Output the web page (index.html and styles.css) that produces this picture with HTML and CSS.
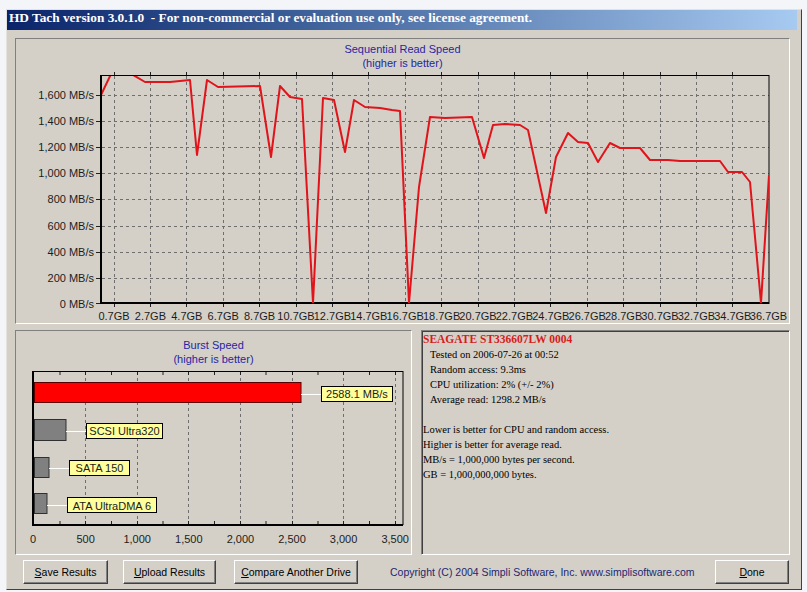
FILE: index.html
```html
<!DOCTYPE html>
<html>
<head>
<meta charset="utf-8">
<title>HD Tach</title>
<link rel="stylesheet" href="styles.css">
</head>
<body>
<div class="window">
  <div class="titlebar">HD Tach version 3.0.1.0&nbsp; - For non-commercial or evaluation use only, see license agreement.</div>
  <div class="content">
    <section class="panel seq">
      <div class="chart-title">Sequential Read Speed<br>(higher is better)</div>
      <svg class="chart" width="773" height="252" viewBox="16 70 773 252">
        <defs><clipPath id="plotclip"><rect x="102" y="76" width="667" height="227"/></clipPath></defs>
        <path class="grid" d="M114.5 76V302M150.5 76V302M186.5 76V302M223.5 76V302M259.5 76V302M296.5 76V302M332.5 76V302M368.5 76V302M405.5 76V302M441.5 76V302M478.5 76V302M514.5 76V302M550.5 76V302M587.5 76V302M623.5 76V302M660.5 76V302M696.5 76V302M732.5 76V302"/>
        <path class="grid" d="M102 278.5H769M102 252.5H769M102 226.5H769M102 199.5H769M102 173.5H769M102 147.5H769M102 121.5H769M102 95.5H769"/>
        <path class="tick" d="M96 303.5H100M96 278.5H100M96 252.5H100M96 226.5H100M96 199.5H100M96 173.5H100M96 147.5H100M96 121.5H100M96 95.5H100"/>
        <path class="tick" d="M114.5 304V307M150.5 304V307M186.5 304V307M223.5 304V307M259.5 304V307M296.5 304V307M332.5 304V307M368.5 304V307M405.5 304V307M441.5 304V307M478.5 304V307M514.5 304V307M550.5 304V307M587.5 304V307M623.5 304V307M660.5 304V307M696.5 304V307M732.5 304V307"/>
        <path class="tick" d="M114.5 72V75M150.5 72V75M186.5 72V75M223.5 72V75M259.5 72V75M296.5 72V75M332.5 72V75M368.5 72V75M405.5 72V75M441.5 72V75M478.5 72V75M514.5 72V75M550.5 72V75M587.5 72V75M623.5 72V75M660.5 72V75M696.5 72V75M732.5 72V75"/>
        <rect class="frame" x="100.5" y="75.5" width="668.5" height="228"/>
        <path class="axis-line" d="M101 75V304M100 303H769"/>
        <polyline class="readline" clip-path="url(#plotclip)" points="100,97 112,72 128,72 145,82 170,82 190,80 197,155 207,80 218,87 260,86 271,157 280,86 290,97 302,99 313,303 323,98 334,100 345,152 354,100 365,107 380,108 392,110 400,111 409,303 419,187 430,117 445,118 472,117 484,158 493,125 505,124 520,125 528,130 546,213 556,157 568,133 578,142 588,143 598,162 610,143 620,148 640,148 650,160 668,160 680,161 720,161 728,172 742,172 750,182 761,303 769,175"/>
        <g class="lbl" text-anchor="end">
          <text x="94" y="308">0 MB/s</text>
          <text x="94" y="282">200 MB/s</text>
          <text x="94" y="256">400 MB/s</text>
          <text x="94" y="230">600 MB/s</text>
          <text x="94" y="203">800 MB/s</text>
          <text x="94" y="177">1,000 MB/s</text>
          <text x="94" y="151">1,200 MB/s</text>
          <text x="94" y="125">1,400 MB/s</text>
          <text x="94" y="99">1,600 MB/s</text>
        </g>
        <g class="lbl" text-anchor="middle">
          <text x="114" y="320">0.7GB</text>
          <text x="150.4" y="320">2.7GB</text>
          <text x="186.8" y="320">4.7GB</text>
          <text x="223.2" y="320">6.7GB</text>
          <text x="259.6" y="320">8.7GB</text>
          <text x="296" y="320">10.7GB</text>
          <text x="332.4" y="320">12.7GB</text>
          <text x="368.8" y="320">14.7GB</text>
          <text x="405.2" y="320">16.7GB</text>
          <text x="441.6" y="320">18.7GB</text>
          <text x="478" y="320">20.7GB</text>
          <text x="514.4" y="320">22.7GB</text>
          <text x="550.8" y="320">24.7GB</text>
          <text x="587.2" y="320">26.7GB</text>
          <text x="623.6" y="320">28.7GB</text>
          <text x="660" y="320">30.7GB</text>
          <text x="696.4" y="320">32.7GB</text>
          <text x="732.8" y="320">34.7GB</text>
          <text x="768.5" y="320">36.7GB</text>
        </g>
      </svg>
    </section>

    <div class="bottom-row">
      <section class="panel burst">
        <div class="chart-title">Burst Speed<br>(higher is better)</div>
        <svg class="chart" width="395" height="188" viewBox="16 366 395 188">
          <path class="grid" d="M85.5 372V524M137.5 372V524M188.5 372V524M240.5 372V524M292.5 372V524M343.5 372V524M395.5 372V524"/>
          <path class="tick" d="M60 521V524M85.5 521V524M111.5 521V524M137.5 521V524M163 521V524M188.5 521V524M214.5 521V524M240.5 521V524M266 521V524M292.5 521V524M318 521V524M343.5 521V524M369.5 521V524M395.5 521V524"/>
          <path class="tick" d="M60 372V375M85.5 372V375M111.5 372V375M137.5 372V375M163 372V375M188.5 372V375M214.5 372V375M240.5 372V375M266 372V375M292.5 372V375M318 372V375M343.5 372V375M369.5 372V375M395.5 372V375"/>
          <rect class="frame" x="33.5" y="371.5" width="369.5" height="153"/>
          <path class="axis-line" d="M33 371V526M32 525H403"/>

          <rect class="bar-red" x="34.5" y="382.5" width="266.5" height="20"/>
          <path class="connector" d="M301 394.5H321"/>
          <rect class="tag" x="321.5" y="386.5" width="71" height="15"/>
          <text class="lbl" x="357" y="398" text-anchor="middle">2588.1 MB/s</text>

          <rect class="bar-gray" x="34.5" y="419.5" width="31.5" height="21"/>
          <path class="connector" d="M66 431.5H86"/>
          <rect class="tag" x="86.5" y="423.5" width="76" height="15"/>
          <text class="lbl" x="124.5" y="435" text-anchor="middle">SCSI Ultra320</text>

          <rect class="bar-gray" x="34.5" y="457.5" width="14.5" height="20"/>
          <path class="connector" d="M49 468.5H69"/>
          <rect class="tag" x="69.5" y="460.5" width="60" height="15"/>
          <text class="lbl" x="99.5" y="472" text-anchor="middle">SATA 150</text>

          <rect class="bar-gray" x="34.5" y="493.5" width="12.5" height="20"/>
          <path class="connector" d="M47 505.5H67"/>
          <rect class="tag" x="67.5" y="497.5" width="89" height="15"/>
          <text class="lbl" x="112" y="509.5" text-anchor="middle">ATA UltraDMA 6</text>

          <g class="lbl" text-anchor="middle">
            <text x="33" y="543">0</text>
            <text x="85.6" y="543">500</text>
            <text x="137.2" y="543">1,000</text>
            <text x="188.8" y="543">1,500</text>
            <text x="240.4" y="543">2,000</text>
            <text x="292" y="543">2,500</text>
            <text x="343.6" y="543">3,000</text>
            <text x="395.2" y="543">3,500</text>
          </g>
        </svg>
      </section>

      <section class="info">
        <div class="drive">SEAGATE ST336607LW 0004</div>
        <div class="ind">Tested on 2006-07-26 at 00:52</div>
        <div class="ind">Random access: 9.3ms</div>
        <div class="ind">CPU utilization: 2% (+/- 2%)</div>
        <div class="ind">Average read: 1298.2 MB/s</div>
        <div class="blank"></div>
        <div>Lower is better for CPU and random access.</div>
        <div>Higher is better for average read.</div>
        <div>MB/s = 1,000,000 bytes per second.</div>
        <div>GB = 1,000,000,000 bytes.</div>
      </section>
    </div>

    <div class="actions">
      <button class="btn btn-save"><u>S</u>ave Results</button>
      <button class="btn btn-upload"><u>U</u>pload Results</button>
      <button class="btn btn-compare"><u>C</u>ompare Another Drive</button>
      <span class="copyright">Copyright (C) 2004 Simpli Software, Inc. www.simplisoftware.com</span>
      <button class="btn btn-done"><u>D</u>one</button>
    </div>
  </div>
</div>
</body>
</html>
```

FILE: styles.css
```css
* { box-sizing: border-box; }
html, body { margin: 0; padding: 0; }
body {
  width: 807px;
  height: 592px;
  overflow: hidden;
  background: #f3f5f8;
  font-family: "Liberation Sans", Arial, sans-serif;
}
.window {
  margin: 9px 0 0 6px;
  width: 796px;
  height: 581px;
  background: #d4d0c8;
  border: 1px solid;
  border-color: #e4e2dc #404040 #404040 #e4e2dc;
  padding-right: 4px;
}
.titlebar {
  height: 20px;
  line-height: 20px;
  padding-left: 2px;
  background: linear-gradient(90deg, #0a246a 0%, #3a5c96 35%, #a6caf0 100%);
  color: #fff;
  font: bold 13.3px "Liberation Serif", "Times New Roman", serif;
  white-space: nowrap;
  overflow: hidden;
}
.content {
  padding: 8px 7px 0 8px;
}
.panel {
  border: 1px solid;
  border-color: #808080 #ffffff #ffffff #808080;
}
.seq { height: 286px; }
.chart-title {
  text-align: center;
  color: #2626a2;
  font-size: 11px;
  line-height: 14px;
}
.seq .chart-title { padding-top: 3px; }
.burst .chart-title { padding-top: 7px; }
.chart { display: block; }
.chart .grid { stroke: #6e6e6e; stroke-width: 1; stroke-dasharray: 3 3; fill: none; }
.chart .tick { stroke: #202020; stroke-width: 1; fill: none; }
.chart .frame { fill: none; stroke: #000; stroke-width: 1; }
.chart .axis-line { stroke: #000; stroke-width: 2; fill: none; }
.chart .readline { fill: none; stroke: #e0141a; stroke-width: 2; stroke-linejoin: round; }
.chart .lbl { font-family: "Liberation Sans", Arial, sans-serif; font-size: 11px; fill: #1c1c1c; }
.chart .bar-red { fill: #ff0000; stroke: #5a0000; stroke-width: 1; }
.chart .bar-gray { fill: #808080; stroke: #303030; stroke-width: 1; }
.chart .connector { stroke: #ffffff; stroke-width: 1; fill: none; }
.chart .tag { fill: #ffff9c; stroke: #000; stroke-width: 1; }

.bottom-row {
  display: flex;
  gap: 9px;
  margin-top: 6px;
  height: 225px;
}
.burst { width: 397px; height: 225px; }
.info {
  flex: 1;
  height: 225px;
  border: 1px solid;
  border-color: #808080 #ffffff #ffffff #808080;
  box-shadow: inset 1px 1px 0 #404040;
  padding: 1px 0 0 1px;
  font-family: "Liberation Serif", "Times New Roman", serif;
  font-size: 10.5px;
  line-height: 15px;
  color: #000;
}
.info .drive {
  font-weight: bold;
  font-size: 11.5px;
  color: #d81c1c;
}
.info .ind { padding-left: 7px; }
.info .blank { height: 15px; }

.actions {
  display: flex;
  align-items: center;
  margin-top: 5px;
  height: 24px;
  padding-left: 8px;
}
.btn {
  height: 24px;
  padding: 0;
  background: #d4d0c8;
  border: 1px solid;
  border-color: #ffffff #404040 #404040 #ffffff;
  box-shadow: inset -1px -1px 0 #808080;
  font-family: "Liberation Sans", Arial, sans-serif;
  font-size: 10.5px;
  color: #000;
}
.btn-save { width: 85px; }
.btn-upload { width: 93px; margin-left: 15px; }
.btn-compare { width: 124px; margin-left: 18px; }
.copyright {
  margin-left: 32px;
  font-size: 10.5px;
  color: #1c2670;
  white-space: nowrap;
}
.btn-done { width: 74px; margin-left: auto; margin-right: 1px; }
```
